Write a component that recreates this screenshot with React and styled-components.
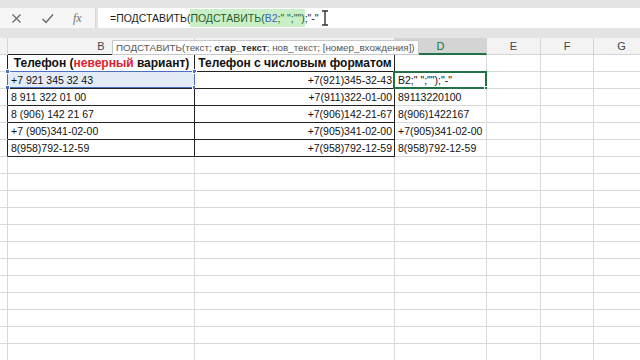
import React from 'react';
import styled, { createGlobalStyle } from 'styled-components';

const GlobalStyle = createGlobalStyle`
  html, body {
    margin: 0;
    padding: 0;
    background: #ffffff;
  }
  body {
    font-family: "Liberation Sans", Arial, sans-serif;
  }
`;

const COLS = [8, 187, 200, 92, 54, 53, 56];
const ROW_H = 17;

const Page = styled.div`
  position: relative;
  width: 640px;
  height: 360px;
  overflow: hidden;
  background: #ffffff;
  display: flex;
  flex-direction: column;
`;

const TopBand = styled.div`
  height: 8px;
  background: #e4e4e4;
  flex-shrink: 0;
`;

const FormulaBar = styled.div`
  height: 20px;
  display: flex;
  align-items: stretch;
  background: #e4e4e4;
  flex-shrink: 0;
`;

const IconGroup = styled.div`
  width: 96px;
  display: flex;
  align-items: center;
  justify-content: space-around;
  padding: 0 4px 0 2px;
  background: #f6f6f6;
  box-sizing: border-box;
  border-right: 1px solid #d6d6d6;
  color: #6f6f6f;
`;

const Fx = styled.span`
  font-family: "Liberation Serif", "Times New Roman", serif;
  font-style: italic;
  font-size: 12px;
  color: #707070;
`;

const FormulaInput = styled.div`
  flex: 1;
  margin-left: 2px;
  background: #ffffff;
  display: flex;
  align-items: center;
  padding-left: 12px;
  font-size: 10.5px;
  color: #1e1e1e;
  white-space: pre;
`;

const Highlight = styled.span`
  background: #c9efc9;
  color: #1f5c2a;
  padding: 3px 0;
`;

const Ref = styled.span`
  color: #3a63c4;
`;

const Gap = styled.div`
  height: 10px;
  background: #e4e4e4;
  flex-shrink: 0;
`;

const Grid = styled.div`
  position: relative;
  display: grid;
  grid-template-columns: ${COLS.map((c) => c + 'px').join(' ')};
  grid-auto-rows: ${ROW_H}px;
  flex: 1;
`;

const HeadCell = styled.div`
  box-sizing: border-box;
  background: ${(p) => (p.$active ? '#d4d4d4' : '#f3f3f3')};
  border-right: 1px solid #d4d4d4;
  border-bottom: ${(p) =>
    p.$active ? '2px solid #217346' : p.$dark ? '1px solid #222' : '1px solid #d4d4d4'};
  color: ${(p) => (p.$active ? '#217346' : '#444')};
  font-size: 11px;
  display: flex;
  align-items: center;
  justify-content: center;
`;

const Cell = styled.div`
  position: relative;
  box-sizing: border-box;
  border-right: 1px solid ${(p) => (p.$darkRight ? '#222' : '#d9d9d9')};
  border-bottom: 1px solid ${(p) => (p.$darkBottom ? '#222' : '#d9d9d9')};
  background: ${(p) => (p.$tint ? '#e3ebf7' : '#ffffff')};
  font-size: ${(p) => (p.$bold ? '12px' : '10.5px')};
  font-weight: ${(p) => (p.$bold ? 700 : 400)};
  color: #111;
  display: flex;
  align-items: center;
  justify-content: ${(p) => (p.$right ? 'flex-end' : p.$center ? 'center' : 'flex-start')};
  padding: 0 2px 0 3px;
  white-space: pre;
  overflow: visible;
`;

const Red = styled.span`
  color: #e0202c;
`;

const RefBox = styled.div`
  position: absolute;
  inset: -1px -1px 0 -1px;
  border: 1px solid #4a6fbf;
  pointer-events: none;
`;

const Handle = styled.div`
  position: absolute;
  width: 5px;
  height: 5px;
  background: ${(p) => p.$color};
  border: 1px solid #fff;
  box-sizing: border-box;
  ${(p) => p.$pos}
`;

const ActiveBox = styled.div`
  position: absolute;
  inset: -1px -1px -1px -2px;
  border: 2px solid #217346;
  pointer-events: none;
`;

const Tooltip = styled.div`
  position: absolute;
  left: 112px;
  top: 2px;
  height: 15px;
  box-sizing: border-box;
  padding: 0 3px;
  background: #ffffff;
  border: 1px solid #c8c8c8;
  font-size: 9.8px;
  color: #555;
  display: flex;
  align-items: center;
  white-space: pre;
`;

const Cursor = () => (
  <svg width="8" height="16" viewBox="0 0 8 16" style={{ marginLeft: 2 }}>
    <path d="M1 1h6M4 1v14M1 15h6" stroke="#333" strokeWidth="1.4" fill="none" />
  </svg>
);

const XIcon = () => (
  <svg width="11" height="11" viewBox="0 0 11 11">
    <path d="M1.5 1.5l8 8M9.5 1.5l-8 8" stroke="#6a6a6a" strokeWidth="1.3" fill="none" />
  </svg>
);

const CheckIcon = () => (
  <svg width="13" height="11" viewBox="0 0 13 11">
    <path d="M1.5 6l3.5 3.5 7-8" stroke="#6a6a6a" strokeWidth="1.4" fill="none" />
  </svg>
);

// C is hidden under the function tooltip in the screenshot
const letters = ['', 'B', '', 'D', 'E', 'F', 'G'];

const rows = [
  ['+7 921 345 32 43', '+7(921)345-32-43', 'B2;" ";"");"-"'],
  ['8 911 322 01 00', '+7(911)322-01-00', '89113220100'],
  ['8 (906) 142 21 67', '+7(906)142-21-67', '8(906)1422167'],
  ['+7 (905)341-02-00', '+7(905)341-02-00', '+7(905)341-02-00'],
  ['8(958)792-12-59', '+7(958)792-12-59', '8(958)792-12-59'],
];

const EMPTY_ROWS = 12;

export default function App() {
  return (
    <Page>
      <GlobalStyle />
      <TopBand />
      <FormulaBar>
        <IconGroup>
          <XIcon />
          <CheckIcon />
          <Fx>fx</Fx>
        </IconGroup>
        <FormulaInput>
          {'=ПОДСТАВИТЬ('}
          <Highlight>
            {'ПОДСТАВИТЬ('}
            <Ref>B2</Ref>
            {';" ";"")'}
          </Highlight>
          {';"-"'}
          <Cursor />
        </FormulaInput>
      </FormulaBar>
      <Gap />
      <Grid>
        {letters.map((l, i) => (
          <HeadCell key={'h' + i} $active={l === 'D'} $dark={i === 1 || i === 2}>
            {l}
          </HeadCell>
        ))}

        <Cell $darkRight />
        <Cell $bold $center $darkRight $darkBottom>
          <span>
            Телефон (<Red>неверный</Red> вариант)
          </span>
        </Cell>
        <Cell $bold $center $darkRight $darkBottom>
          Телефон с числовым форматом
        </Cell>
        <Cell />
        <Cell />
        <Cell />
        <Cell />

        {rows.map((r, i) => (
          <React.Fragment key={'r' + i}>
            <Cell $darkRight />
            <Cell $darkRight $darkBottom $tint={i === 0}>
              {r[0]}
              {i === 0 && (
                <RefBox>
                  <Handle $color="#4a6fbf" $pos="left:-3px;top:-3px;" />
                  <Handle $color="#4a6fbf" $pos="right:-3px;top:-3px;" />
                  <Handle $color="#4a6fbf" $pos="left:-3px;bottom:-3px;" />
                  <Handle $color="#4a6fbf" $pos="right:-3px;bottom:-3px;" />
                </RefBox>
              )}
            </Cell>
            <Cell $right $darkRight $darkBottom>
              {r[1]}
            </Cell>
            <Cell>
              {r[2]}
              {i === 0 && (
                <ActiveBox>
                  <Handle $color="#217346" $pos="right:-4px;bottom:-4px;" />
                </ActiveBox>
              )}
            </Cell>
            <Cell />
            <Cell />
            <Cell />
          </React.Fragment>
        ))}

        {Array.from({ length: EMPTY_ROWS }).map((_, i) => (
          <React.Fragment key={'e' + i}>
            {COLS.map((c, j) => (
              <Cell key={j} />
            ))}
          </React.Fragment>
        ))}

        <Tooltip>
          {'ПОДСТАВИТЬ(текст; '}
          <b style={{ color: '#333' }}>стар_текст</b>
          {'; нов_текст; [номер_вхождения])'}
        </Tooltip>
      </Grid>
    </Page>
  );
}
